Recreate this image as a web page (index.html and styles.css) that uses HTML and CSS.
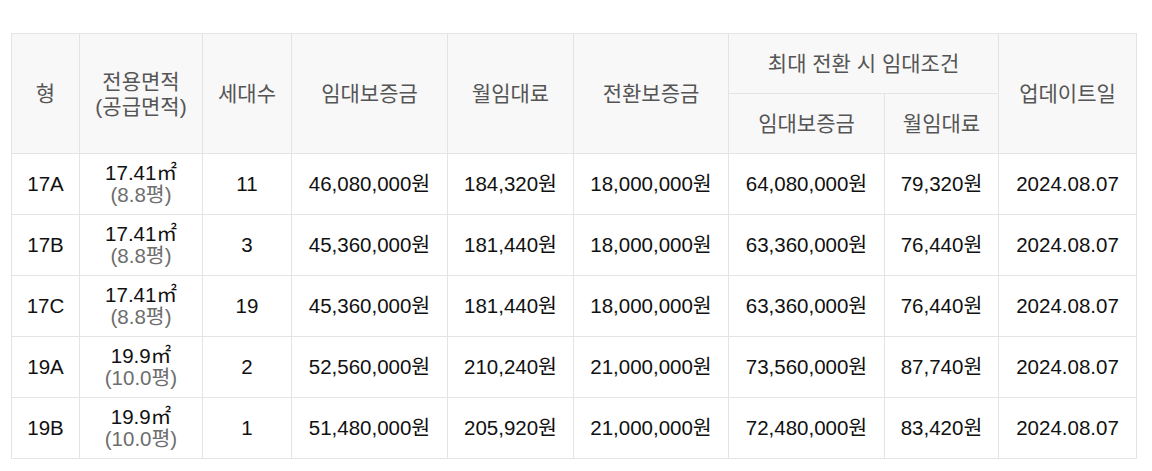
FILE: index.html
```html
<!DOCTYPE html>
<html lang="ko">
<head>
<meta charset="utf-8">
<link rel="stylesheet" href="styles.css">
</head>
<body>
<div class="wrap">
<table class="rent">
  <colgroup>
    <col class="c-type"><col class="c-area"><col class="c-cnt"><col class="c-dep"><col class="c-rent"><col class="c-conv"><col class="c-mdep"><col class="c-mrent"><col class="c-date">
  </colgroup>
  <thead>
    <tr class="h1">
      <th rowspan="2">형</th>
      <th rowspan="2">전용면적<br>(공급면적)</th>
      <th rowspan="2">세대수</th>
      <th rowspan="2">임대보증금</th>
      <th rowspan="2">월임대료</th>
      <th rowspan="2">전환보증금</th>
      <th colspan="2">최대 전환 시 임대조건</th>
      <th rowspan="2">업데이트일</th>
    </tr>
    <tr class="h2">
      <th>임대보증금</th>
      <th>월임대료</th>
    </tr>
  </thead>
  <tbody>
    <tr>
      <td>17A</td>
      <td><div class="area">17.41㎡</div><div class="sub">(8.8평)</div></td>
      <td>11</td>
      <td>46,080,000원</td>
      <td>184,320원</td>
      <td>18,000,000원</td>
      <td>64,080,000원</td>
      <td>79,320원</td>
      <td>2024.08.07</td>
    </tr>
    <tr>
      <td>17B</td>
      <td><div class="area">17.41㎡</div><div class="sub">(8.8평)</div></td>
      <td>3</td>
      <td>45,360,000원</td>
      <td>181,440원</td>
      <td>18,000,000원</td>
      <td>63,360,000원</td>
      <td>76,440원</td>
      <td>2024.08.07</td>
    </tr>
    <tr>
      <td>17C</td>
      <td><div class="area">17.41㎡</div><div class="sub">(8.8평)</div></td>
      <td>19</td>
      <td>45,360,000원</td>
      <td>181,440원</td>
      <td>18,000,000원</td>
      <td>63,360,000원</td>
      <td>76,440원</td>
      <td>2024.08.07</td>
    </tr>
    <tr>
      <td>19A</td>
      <td><div class="area">19.9㎡</div><div class="sub">(10.0평)</div></td>
      <td>2</td>
      <td>52,560,000원</td>
      <td>210,240원</td>
      <td>21,000,000원</td>
      <td>73,560,000원</td>
      <td>87,740원</td>
      <td>2024.08.07</td>
    </tr>
    <tr>
      <td>19B</td>
      <td><div class="area">19.9㎡</div><div class="sub">(10.0평)</div></td>
      <td>1</td>
      <td>51,480,000원</td>
      <td>205,920원</td>
      <td>21,000,000원</td>
      <td>72,480,000원</td>
      <td>83,420원</td>
      <td>2024.08.07</td>
    </tr>
  </tbody>
</table>
</div>
</body>
</html>
```

FILE: styles.css
```css
html, body {
  margin: 0;
  padding: 0;
  background: #ffffff;
}

.wrap {
  padding: 33px 0 0 11px;
}

.rent {
  width: 1125px;
  table-layout: fixed;
  border-collapse: collapse;
  border-top: 1px solid #cccccc;
  font-family: "Liberation Sans", "Noto Sans CJK KR", sans-serif;
  font-size: 20.5px;
  color: #111111;
}

.c-type { width: 68px; }
.c-area { width: 123px; }
.c-cnt { width: 89px; }
.c-dep { width: 156px; }
.c-rent { width: 126px; }
.c-conv { width: 155px; }
.c-mdep { width: 156px; }
.c-mrent { width: 114px; }
.c-date { width: 138px; }

.rent th,
.rent td {
  border: 1px solid #e4e4e4;
  text-align: center;
  vertical-align: middle;
  padding: 0;
}

.rent th {
  background: #f8f8f8;
  color: #555555;
  font-weight: normal;
  font-size: 21px;
  line-height: 25px;
}

.rent thead tr {
  height: 60px;
}

.rent tbody tr {
  height: 61px;
}

.rent td {
  line-height: 22px;
}

.area {
  line-height: 22px;
}

.sub {
  color: #6e6e6e;
  font-size: 20.5px;
  line-height: 22px;
}
```
